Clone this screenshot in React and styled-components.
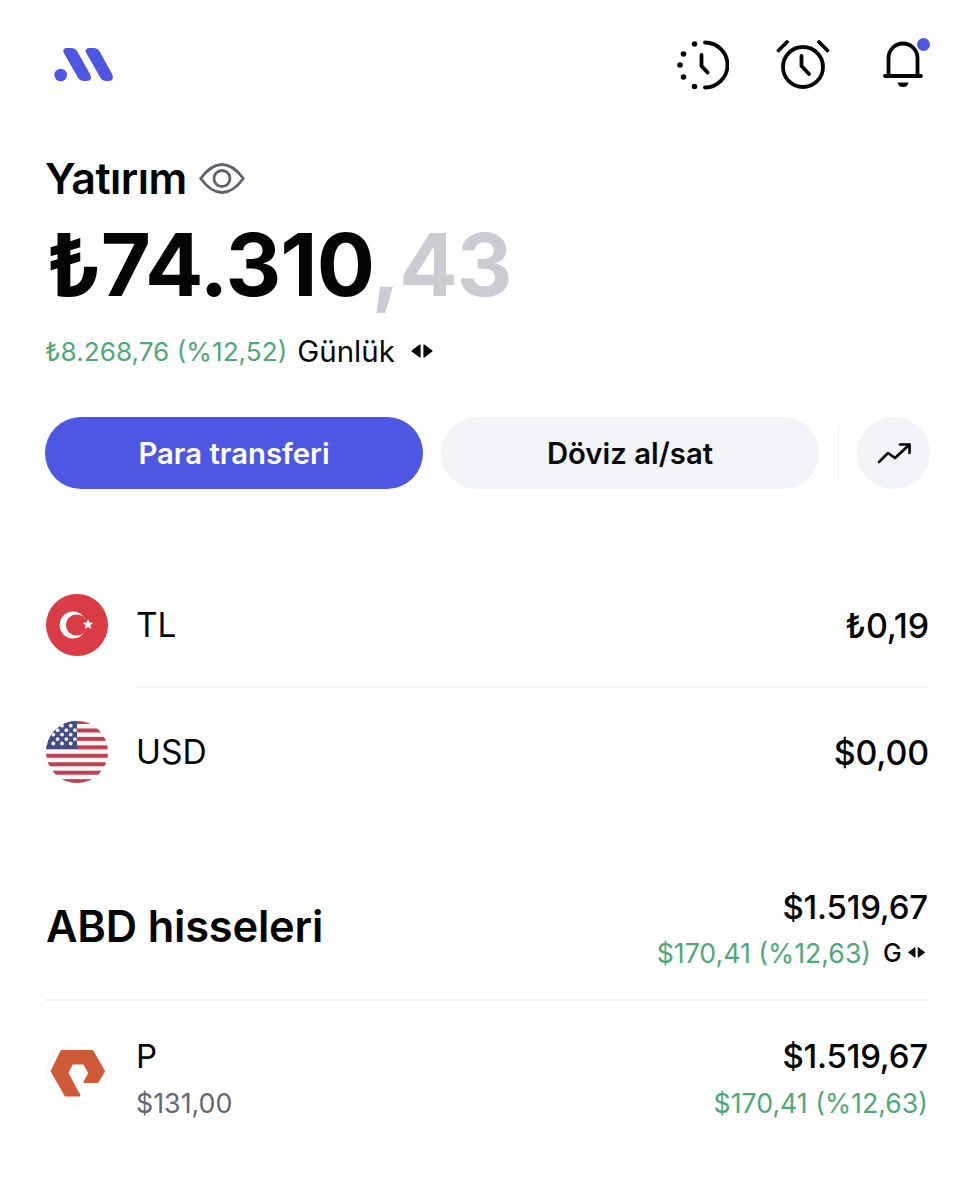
import React from "react";
import styled, { createGlobalStyle } from "styled-components";

const Global = createGlobalStyle`
  html, body { margin: 0; padding: 0; background: #fff; }
  body { font-family: Inter, "Liberation Sans", sans-serif; color: #050505; }
`;

const Page = styled.div`
  width: 975px;
  height: 1199px;
  box-sizing: border-box;
  padding: 38px 46px 0 46px;
  overflow: hidden;
`;
const TopBar = styled.header`
  display: flex;
  align-items: center;
  justify-content: space-between;
  height: 54px;
`;
const TopIcons = styled.div`
  display: flex;
  align-items: center;
  gap: 47px;
  margin-right: -1px;
`;
const BellWrap = styled.div`
  position: relative;
  width: 47px;
  height: 54px;
  margin-left: 6px;
  padding-top: 3px;
  box-sizing: border-box;
`;
const Dot = styled.span`
  position: absolute;
  top: 0;
  right: 0;
  width: 13px;
  height: 13px;
  border-radius: 50%;
  background: #4d57e3;
`;
const TitleRow = styled.div`
  display: flex;
  align-items: center;
  gap: 12px;
  margin-top: 61px;
  height: 50px;
`;
const Title = styled.h1`
  margin: 0 0 0 -1px;
  font-size: 43px;
  line-height: 50px;
  font-weight: 600;
  letter-spacing: -0.5px;
`;
const Amount = styled.div`
  margin-top: 16px;
  font-size: 86.5px;
  line-height: 92px;
  font-weight: 700;
  letter-spacing: -1px;
`;
const Cents = styled.span`
  color: #cbccd3;
`;
const DailyRow = styled.div`
  display: flex;
  align-items: center;
  margin-top: 22px;
  height: 36px;
`;
const Gain = styled.span`
  color: #4fa877;
  font-size: 26.2px;
  font-weight: 400;
  margin-left: -1px;
`;
const Period = styled.span`
  color: #050505;
  font-size: 29.5px;
  margin-left: 10px;
  margin-right: 15px;
`;
const Actions = styled.div`
  display: flex;
  align-items: center;
  margin-top: 48px;
  margin-left: -1px;
`;
const Pill = styled.button`
  flex: none;
  width: 378px;
  height: 72px;
  border: 0;
  border-radius: 36px;
  margin-right: 18px;
  background: ${(p) => (p.$primary ? "#4d57e3" : "#f3f4f7")};
  color: ${(p) => (p.$primary ? "#fff" : "#0a0a0a")};
  font: 600 29.3px Inter, sans-serif;
`;
const VRule = styled.span`
  flex: none;
  width: 1px;
  height: 55px;
  background: #efeff2;
  margin-left: 1px;
`;
const RoundBtn = styled.button`
  flex: none;
  width: 73px;
  height: 72px;
  border: 0;
  border-radius: 50%;
  background: #f3f4f7;
  margin-left: 18px;
  padding: 0;
  display: flex;
  align-items: center;
  justify-content: center;
`;
const Currencies = styled.section`
  margin-top: 105px;
`;
const Row = styled.div`
  display: flex;
  align-items: center;
  height: 62px;
`;
const IconSlot = styled.div`
  width: 90px;
  flex: none;
  display: flex;
`;
const Name = styled.span`
  flex: 1;
  font-size: 33.5px;
  font-weight: 400;
`;
const Value = styled.span`
  font-size: 34px;
  font-weight: 500;
  letter-spacing: -0.2px;
`;
const RowRule = styled.div`
  height: 2px;
  background: #f1f1f3;
  margin: 30px 0 33px 90px;
`;
const StockHead = styled.div`
  display: flex;
  justify-content: space-between;
  align-items: center;
  margin-top: 100px;
  height: 86px;
`;
const StockTitle = styled.h2`
  margin: 0;
  font-size: 43.4px;
  font-weight: 600;
  letter-spacing: -0.2px;
`;
const RightCol = styled.div`
  display: flex;
  flex-direction: column;
  align-items: flex-end;
  gap: ${(p) => p.$gap}px;
  margin-top: ${(p) => p.$offset}px;
  margin-right: 1px;
`;
const Big = styled.div`
  font-size: 33px;
  line-height: 40px;
  font-weight: 500;
  letter-spacing: -0.2px;
`;
const Small = styled.div`
  display: flex;
  align-items: center;
  font-size: 26.7px;
  line-height: 34px;
  color: #4fa877;
`;
const G = styled.span`
  color: #050505;
  font-size: 25px;
  font-weight: 500;
  margin: 0 5px 0 12px;
`;
const SmallArrows = styled.span`
  display: flex;
  margin-right: 2px;
`;
const StockRule = styled.div`
  height: 2px;
  background: #f1f1f3;
  margin: 30px 0 0 -1px;
`;
const StockRow = styled.div`
  display: flex;
  align-items: center;
  margin-top: 33px;
  height: 80px;
`;
const StockInfo = styled.div`
  flex: 1;
  display: flex;
  flex-direction: column;
  gap: 10px;
  margin-top: 7px;
`;
const Ticker = styled.div`
  font-size: 33px;
  line-height: 40px;
`;
const SubPrice = styled.div`
  font-size: 26.8px;
  line-height: 34px;
  color: #646779;
`;
const LogoSvg = styled.svg`
  display: block;
  margin-left: 7px;
`;
const Stroke = styled.svg`
  display: block;
  fill: none;
  stroke: #050505;
  stroke-linecap: round;
  stroke-linejoin: round;
`;

const Logo = () => (
  <LogoSvg width="62" height="38" viewBox="0 0 62 38" fill="#4d57e3">
    <circle cx="7.7" cy="29" r="6.3" />
    <path d="M10.6 6.5 Q9.2 2 14 2 H18 Q22.5 2 24.6 6 L37 28 Q40.3 35 33.5 35 H31 Q26.5 35 24.3 30.5 Z" />
    <path d="M33 6.5 Q31.6 2 36.4 2 H40.4 Q44.9 2 47 6 L59 28 Q62 35 55.5 35 H53.4 Q48.9 35 46.7 30.5 Z" />
  </LogoSvg>
);

const History = () => (
  <Stroke width="52" height="52" viewBox="0 0 52 52" strokeWidth="3.8">
    <path d="M28 3.5 A22.5 22.5 0 0 1 28 48.5" />
    <path d="M24.5 16 V27 L30.5 33.5" />
    <g fill="#050505" stroke="none">
      <circle cx="17.5" cy="5" r="2.8" />
      <circle cx="6.5" cy="15" r="2.8" />
      <circle cx="3" cy="26" r="2.8" />
      <circle cx="6.5" cy="38" r="2.8" />
      <circle cx="17.5" cy="47.5" r="2.8" />
    </g>
  </Stroke>
);
const Alarm = () => (
  <Stroke width="54" height="52" viewBox="0 0 54 52" strokeWidth="3.8">
    <circle cx="27" cy="28" r="20" />
    <path d="M25.5 17 V27 L33 35" />
    <path d="M2.5 11.5 L11 3 M51.5 11.5 L43 3" />
  </Stroke>
);
const Bell = () => (
  <Stroke width="40" height="48" viewBox="0 0 40 48" strokeWidth="3.8">
    <path d="M5.5 35 V17 A14.5 14.5 0 0 1 34.5 17 V35" />
    <path d="M2 35 H38" />
    <path d="M14.5 41.5 H25.5 Q24.5 46 20 46 Q15.5 46 14.5 41.5 Z" fill="#050505" stroke="none" />
  </Stroke>
);
const Eye = () => (
  <svg width="46" height="31" viewBox="0 0 46 31" fill="none" stroke="#5f6170" strokeWidth="2.8">
    <path d="M1.7 15.5 Q12 1.5 23 1.5 Q34 1.5 44.3 15.5 Q34 29.5 23 29.5 Q12 29.5 1.7 15.5 Z" />
    <circle cx="23" cy="15.5" r="8" />
  </svg>
);
const Arrows = ({ size = 1 }) => (
  <svg width={24 * size} height={16 * size} viewBox="0 0 24 16" fill="#050505" stroke="#050505" strokeWidth="1.2" strokeLinejoin="round">
    <path d="M10 2 V14 L2 8 Z" />
    <path d="M14 2 V14 L22 8 Z" />
  </svg>
);
const Trend = () => (
  <Stroke width="34" height="22" viewBox="0 0 34 22" strokeWidth="2.6">
    <path d="M2 20 L11 11 L18 16 L32 3" />
    <path d="M23 2.5 H32.5 V11" />
  </Stroke>
);
const TrFlag = () => (
  <svg width="62" height="62" viewBox="0 0 62 62">
    <circle cx="31" cy="31" r="31" fill="#d93c44" />
    <circle cx="27" cy="31" r="13.4" fill="#fff" />
    <circle cx="30.6" cy="31" r="10.6" fill="#d93c44" />
    <path d="M42 25 L43.4 28.6 L47.3 28.8 L44.3 31.3 L45.3 35 L42 32.9 L38.7 35 L39.7 31.3 L36.7 28.8 L40.6 28.6 Z" fill="#fff" />
  </svg>
);
const UsFlag = () => {
  const stripes = [0, 1, 2, 3, 4, 5, 6, 7];
  const stars = [];
  for (let r = 0; r < 5; r++) {
    const odd = r % 2 === 1;
    for (let c = 0; c < 3; c++) {
      stars.push([(odd ? 11.6 : 7.3) + c * 8.7, 4.7 + r * 4.45]);
    }
  }
  return (
    <svg width="62" height="62" viewBox="0 0 62 62">
      <defs>
        <clipPath id="usclip">
          <circle cx="31" cy="31" r="31" />
        </clipPath>
      </defs>
      <g clipPath="url(#usclip)">
        <rect width="62" height="62" fill="#faf7f7" />
        {stripes.map((i) => (
          <rect key={i} x="0" y={-1 + i * 8.45} width="62" height="4" fill="#c0404f" />
        ))}
        <rect x="0" y="0" width="31" height="28" fill="#434c84" />
        {stars.map(([x, y], i) => (
          <circle key={i} cx={x} cy={y} r="1.9" fill="#f4f4f8" />
        ))}
      </g>
    </svg>
  );
};
const PureLogo = () => (
  <svg width="62" height="62" viewBox="0 0 62 62">
    <circle cx="31" cy="31" r="30.5" fill="#fff" stroke="#f6f6f6" />
    <path
      d="M15.5 8 H46.5 L58 28.3 L51.7 39 H38.5 L43.3 30 L38 20.5 H26 L21.3 30 L33.5 52.5 H19.5 L5.7 28.3 Z"
      fill="#cf5a38"
      stroke="#cf5a38"
      strokeWidth="2"
      strokeLinejoin="round"
    />
  </svg>
);

export default function App() {
  return (
    <Page>
      <Global />
      <TopBar>
        <Logo />
        <TopIcons>
          <History />
          <Alarm />
          <BellWrap>
            <Bell />
            <Dot />
          </BellWrap>
        </TopIcons>
      </TopBar>
      <TitleRow>
        <Title>Yatırım</Title>
        <Eye />
      </TitleRow>
      <Amount>
        ₺74.310<Cents>,43</Cents>
      </Amount>
      <DailyRow>
        <Gain>₺8.268,76 (%12,52)</Gain>
        <Period>Günlük</Period>
        <Arrows />
      </DailyRow>
      <Actions>
        <Pill $primary>Para transferi</Pill>
        <Pill>Döviz al/sat</Pill>
        <VRule />
        <RoundBtn>
          <Trend />
        </RoundBtn>
      </Actions>
      <Currencies>
        <Row>
          <IconSlot><TrFlag /></IconSlot>
          <Name>TL</Name>
          <Value>₺0,19</Value>
        </Row>
        <RowRule />
        <Row>
          <IconSlot><UsFlag /></IconSlot>
          <Name>USD</Name>
          <Value>$0,00</Value>
        </Row>
      </Currencies>
      <StockHead>
        <StockTitle>ABD hisseleri</StockTitle>
        <RightCol $offset={4} $gap={9}>
          <Big>$1.519,67</Big>
          <Small>
            $170,41 (%12,63)
            <G>G</G>
            <SmallArrows><Arrows size={0.8} /></SmallArrows>
          </Small>
        </RightCol>
      </StockHead>
      <StockRule />
      <StockRow>
        <IconSlot><PureLogo /></IconSlot>
        <StockInfo>
          <Ticker>P</Ticker>
          <SubPrice>$131,00</SubPrice>
        </StockInfo>
        <RightCol $offset={7} $gap={10}>
          <Big>$1.519,67</Big>
          <Small>$170,41 (%12,63)</Small>
        </RightCol>
      </StockRow>
    </Page>
  );
}
